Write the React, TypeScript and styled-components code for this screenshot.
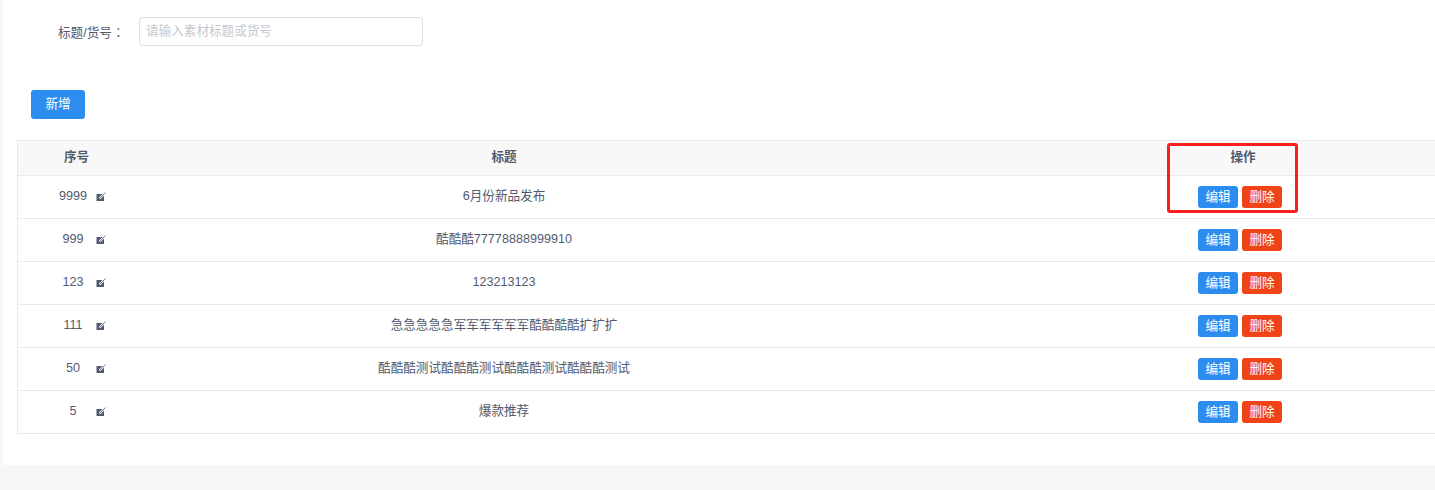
import React from "react";
import styled, { createGlobalStyle } from "styled-components";

const FONT = `"Liberation Sans", "Noto Sans CJK SC", sans-serif`;

const Global = createGlobalStyle`
  html, body { margin: 0; padding: 0; height: 100%; background: #f5f7f9; overflow: hidden; }
  * { box-sizing: border-box; }
  body { font-family: ${FONT}; font-size: 12.6px; color: #515a6e; }
`;

const Page = styled.div`
  position: relative;
  width: 1435px;
  height: 490px;
  overflow: hidden;
`;

const Panel = styled.div`
  margin-left: 3px;
  width: 1432px;
  height: 465px;
  background: #fff;
  padding: 17px 0 0 14px;
`;

const SearchRow = styled.div`
  display: flex;
  align-items: center;
  height: 29px;
  padding-left: 41px;
`;

const Label = styled.label`
  width: 81px;
  padding-bottom: 1px;
  color: #515a6e;
  white-space: nowrap;
`;

const LabelColon = styled.span`
  font-family: "Noto Sans CJK TC", sans-serif;
`;

const Input = styled.input`
  width: 284px;
  height: 29px;
  padding: 0 6px 2px;
  border: 1px solid #dcdee2;
  border-radius: 4px;
  font: 12.6px ${FONT};
  color: #515a6e;
  outline: none;
  &::placeholder { color: #c5c8ce; opacity: 1; }
`;

const AddButton = styled.button`
  display: block;
  width: 54px;
  height: 29px;
  margin: 44px 0 21px 14px;
  padding: 0 0 4px;
  border: 0;
  border-radius: 3px;
  background: #2d8cf0;
  color: #fff;
  font: 12.6px ${FONT};
`;

const Table = styled.div`
  width: 1600px;
  border-left: 1px solid #e8eaec;
  border-top: 1px solid #e8eaec;
`;

const Row = styled.div<{ $head?: boolean }>`
  display: grid;
  grid-template-columns: 117px 738px 740px;
  align-items: center;
  height: ${(p) => (p.$head ? "35px" : "43px")};
  background: ${(p) => (p.$head ? "#f8f8f9" : "#fff")};
  border-bottom: 1px solid #e8eaec;
  font-weight: ${(p) => (p.$head ? 700 : 400)};
`;

const Cell = styled.div`
  padding-bottom: 2px;
  line-height: 18px;
  text-align: center;
  white-space: nowrap;
`;

const SeqCell = styled.div`
  display: flex;
  align-items: center;
  padding-left: 35px;
`;

const SeqNumber = styled.span`
  width: 40px;
  padding-bottom: 2px;
  text-align: center;
`;

const EditIcon = styled.svg`
  width: 10px;
  height: 10px;
  margin-left: 3px;
`;

const Actions = styled.div`
  display: flex;
  justify-content: center;
  gap: 4px;
  padding-right: 6px;
`;

const SmallButton = styled.button<{ $danger?: boolean }>`
  width: 40px;
  height: 22px;
  padding: 0 0 3px;
  border: 0;
  border-radius: 3px;
  background: ${(p) => (p.$danger ? "#f04418" : "#2d8cf0")};
  color: #fff;
  font: 12.6px ${FONT};
`;

const Highlight = styled.div`
  position: absolute;
  left: 1167px;
  top: 143px;
  width: 131px;
  height: 70px;
  border: 3px solid #fb1e1e;
  border-radius: 3px;
  pointer-events: none;
`;

const rows = [
  ["9999", "6月份新品发布"],
  ["999", "酷酷酷77778888999910"],
  ["123", "123213123"],
  ["111", "急急急急急军军军军军军酷酷酷酷扩扩扩"],
  ["50", "酷酷酷测试酷酷酷测试酷酷酷测试酷酷酷测试"],
  ["5", "爆款推荐"],
];

const Pencil = () => (
  <EditIcon viewBox="0 0 10 10">
    <rect x="0.5" y="2" width="7.5" height="7" fill="#515a6e" />
    <path d="M3.5 6.5 L9.5 0.5" stroke="#fff" strokeWidth="2" />
    <path d="M3.5 6.5 L9.5 0.5" stroke="#6d7690" strokeWidth="1" />
  </EditIcon>
);

export default function App() {
  return (
    <Page>
      <Global />
      <Panel>
        <SearchRow>
          <Label>
            标题/货号<LabelColon>：</LabelColon>
          </Label>
          <Input placeholder="请输入素材标题或货号" />
        </SearchRow>
        <AddButton>新增</AddButton>
        <Table>
          <Row $head>
            <Cell>序号</Cell>
            <Cell>标题</Cell>
            <Cell>操作</Cell>
          </Row>
          {rows.map(([seq, title]) => (
            <Row key={seq}>
              <SeqCell>
                <SeqNumber>{seq}</SeqNumber>
                <Pencil />
              </SeqCell>
              <Cell>{title}</Cell>
              <Actions>
                <SmallButton>编辑</SmallButton>
                <SmallButton $danger>删除</SmallButton>
              </Actions>
            </Row>
          ))}
        </Table>
      </Panel>
      <Highlight />
    </Page>
  );
}
